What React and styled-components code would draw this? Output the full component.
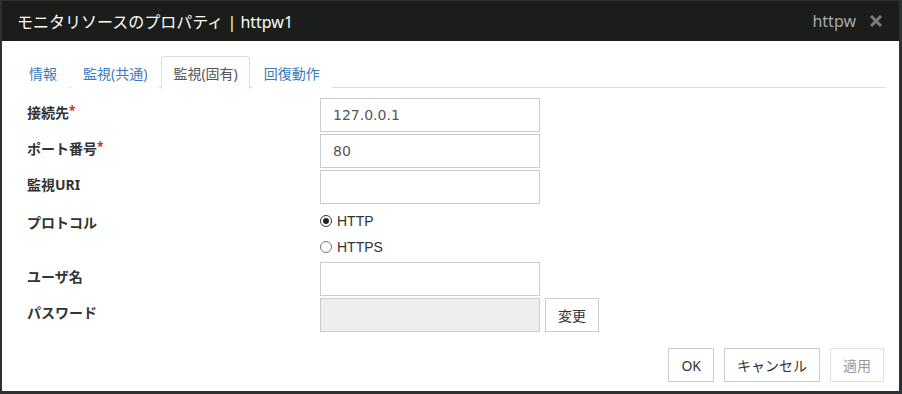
import React from "react";
import styled, { createGlobalStyle } from "styled-components";

const Global = createGlobalStyle`
  html, body { margin: 0; padding: 0; background: #2e3133; }
  body { font-family: "Noto Sans", "Noto Sans CJK JP", sans-serif; }
  * { box-sizing: border-box; }
`;

const Dialog = styled.div`
  margin: 1px 3px 0 2px;
  width: 897px;
  height: 390px;
  background: #fff;
  display: flex;
  flex-direction: column;
`;

const Header = styled.div`
  height: 40px;
  background: #1a1d1a;
  display: flex;
  align-items: center;
  padding: 0 16px 0 15px;
  color: #fff;
  font-size: 16px;
  font-family: "Noto Sans", "Noto Sans CJK JP", sans-serif;
`;

const Title = styled.div`
  flex: 1;
  white-space: nowrap;
`;

const Tag = styled.span`
  color: #a9a9a9;
  margin-right: 13px;
`;

const Body = styled.div`
  flex: 1;
  display: flex;
  flex-direction: column;
  padding: 15px 14px 0 15px;
`;

const Tabs = styled.div`
  display: flex;
  height: 32px;
  border-bottom: 1px solid #dddddd;
`;

const Tab = styled.div`
  height: 32px;
  padding: 0 11px;
  margin-right: 2px;
  display: flex;
  align-items: center;
  font-size: 14px;
  color: ${(p) => (p.$active ? "#555" : "#3a7bbf")};
  background: #fff;
  border: 1px solid ${(p) => (p.$active ? "#dddddd" : "transparent")};
  border-bottom: none;
  border-radius: 4px 4px 0 0;
  ${(p) => (p.$active ? "height: 33px; margin-bottom: -1px;" : "")}
  white-space: nowrap;
`;

const Form = styled.div`
  display: grid;
  grid-template-columns: 293px 1fr;
  padding: 10px 0 0 10px;
  row-gap: 2px;
  align-items: center;
`;

const Label = styled.div`
  font-size: 14px;
  font-weight: bold;
  color: #333;
  margin-top: -7px;
  white-space: nowrap;
  align-self: ${(p) => (p.$top ? "start" : "center")};
  ${(p) => (p.$top ? "margin-top: 6px;" : "")}
`;

const Req = styled.span`
  color: #c9302c;
  font-weight: bold;
  font-size: 12px;
  vertical-align: 3px;
`;

const Field = styled.div`
  display: flex;
  align-items: center;
  gap: 5px;
`;

const Input = styled.div`
  width: 220px;
  height: 34px;
  border: 1px solid #cccccc;
  background: ${(p) => (p.$disabled ? "#eeeeee" : "#fff")};
  padding: 0 12px;
  display: flex;
  align-items: center;
  font-size: 14px;
  font-family: "DejaVu Sans", "Noto Sans CJK JP", sans-serif;
  color: #555;
`;

const Radios = styled.div`
  display: flex;
  flex-direction: column;
`;

const RadioRow = styled.label`
  height: 27px;
  display: flex;
  align-items: center;
  gap: 5px;
  font-size: 14px;
  font-weight: normal;
  font-family: "Liberation Sans", sans-serif;
  color: #333;
  padding-top: ${(p) => (p.$first ? "2px" : "0")};
`;

const Circle = styled.span`
  width: 12px;
  height: 12px;
  border-radius: 50%;
  border: 1px solid ${(p) => (p.$checked ? "#333" : "#777")};
  background: #fff;
  display: flex;
  align-items: center;
  justify-content: center;
  &::after {
    content: "";
    width: 6px;
    height: 6px;
    border-radius: 50%;
    background: ${(p) => (p.$checked ? "#222" : "transparent")};
  }
`;

const Button = styled.button`
  height: 34px;
  padding: 0 12px;
  background: #fff;
  border: 1px solid ${(p) => (p.$disabled ? "#e2e2e2" : "#cccccc")};
  color: ${(p) => (p.$disabled ? "#999" : "#333")};
  font-size: 14px;
  font-family: "Noto Sans", "Noto Sans CJK JP", sans-serif;
  border-radius: 0;
  cursor: pointer;
`;

const Footer = styled.div`
  display: flex;
  justify-content: flex-end;
  gap: 10px;
  margin-top: 16px;
  padding-right: 1px;
`;

const Close = () => (
  <svg width="14" height="14" viewBox="0 0 14 14">
    <path d="M2 2 L12 12 M12 2 L2 12" stroke="#7a7a7a" strokeWidth="3" strokeLinecap="butt" />
  </svg>
);

export default function App() {
  return (
    <>
      <Global />
      <Dialog>
        <Header>
          <Title>モニタリソースのプロパティ | httpw1</Title>
          <Tag>httpw</Tag>
          <Close />
        </Header>
        <Body>
          <Tabs>
            <Tab>情報</Tab>
            <Tab>監視(共通)</Tab>
            <Tab $active>監視(固有)</Tab>
            <Tab>回復動作</Tab>
          </Tabs>
          <Form>
            <Label>
              接続先<Req>*</Req>
            </Label>
            <Field>
              <Input>127.0.0.1</Input>
            </Field>
            <Label>
              ポート番号<Req>*</Req>
            </Label>
            <Field>
              <Input>80</Input>
            </Field>
            <Label>監視URI</Label>
            <Field>
              <Input />
            </Field>
            <Label $top>プロトコル</Label>
            <Radios>
              <RadioRow $first>
                <Circle $checked />
                HTTP
              </RadioRow>
              <RadioRow>
                <Circle />
                HTTPS
              </RadioRow>
            </Radios>
            <Label>ユーザ名</Label>
            <Field>
              <Input />
            </Field>
            <Label>パスワード</Label>
            <Field>
              <Input $disabled />
              <Button>変更</Button>
            </Field>
          </Form>
          <Footer>
            <Button>OK</Button>
            <Button>キャンセル</Button>
            <Button $disabled>適用</Button>
          </Footer>
        </Body>
      </Dialog>
    </>
  );
}
